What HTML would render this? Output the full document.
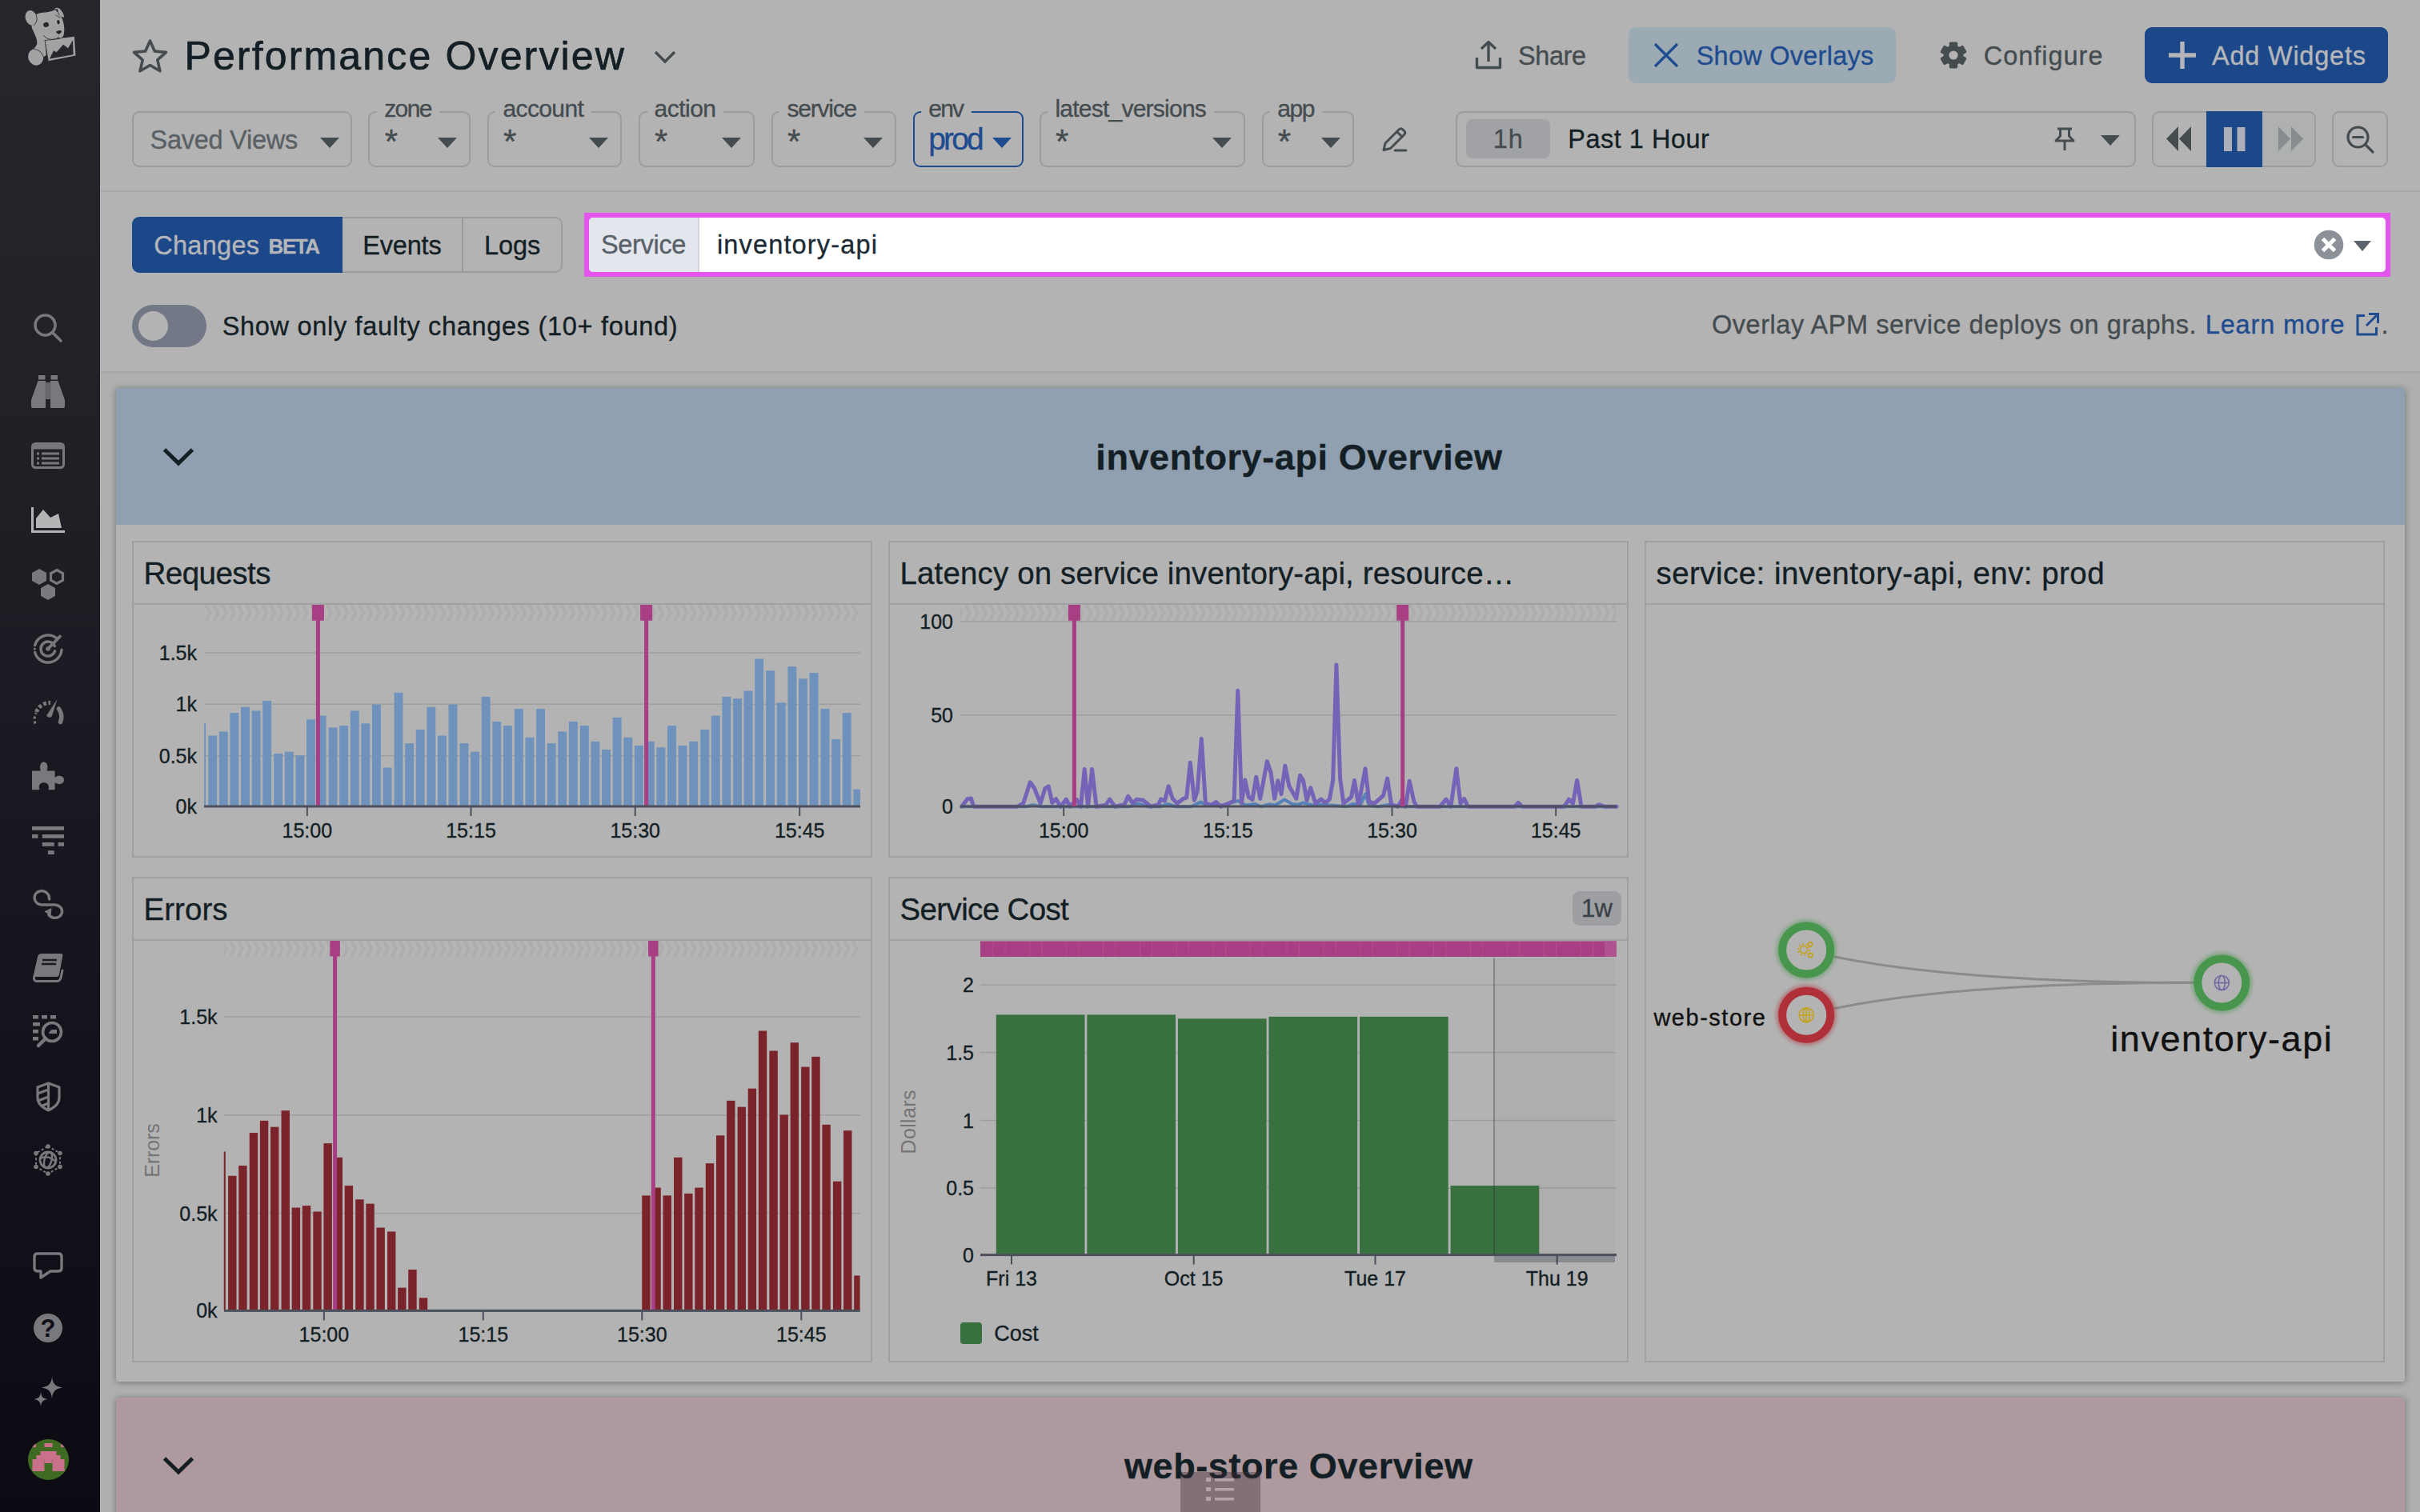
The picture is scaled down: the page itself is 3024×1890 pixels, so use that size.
<!DOCTYPE html>
<html lang="en"><head><meta charset="utf-8"><title>Performance Overview</title>
<style>
*{box-sizing:border-box;margin:0;padding:0}
html,body{width:3024px;height:1890px;overflow:hidden}
body{position:relative;background:#b3b3b3;font-family:"Liberation Sans","DejaVu Sans",sans-serif;color:#141f25;-webkit-font-smoothing:antialiased}
.abs{position:absolute}
.t{position:absolute;white-space:nowrap;line-height:1;-webkit-text-stroke:.35px currentColor}
svg{display:block;overflow:visible}
/* sidebar */
#side{position:absolute;left:0;top:0;width:125px;height:1890px;background:linear-gradient(180deg,#27262d 0%,#222027 30%,#17151d 60%,#0c0a12 100%)}
#side svg{position:absolute}
#sideedge{position:absolute;left:125px;top:0;width:1px;height:1890px;background:#b7b7ba}
/* header */
#hdr{position:absolute;left:125px;top:0;width:2899px;height:239px;background:#b3b3b3}
.hl{position:absolute;left:126px;width:2898px;height:2px;background:#a6a7a9}
.fbox{position:absolute;top:139px;height:70px;border:2px solid #9a9ca2;border-radius:9px}
.fbox .lab{position:absolute;left:12px;top:-24px;padding:0 9px 0 7px;background:#b3b3b3;font-size:30px;line-height:34px;color:#454c50;white-space:nowrap}
.fbox .val{position:absolute;left:19px;top:7px;font-size:38px;line-height:40px;color:#454c50}
.caret{position:absolute;width:0;height:0;border-left:12px solid transparent;border-right:12px solid transparent;border-top:13px solid #454c50}
.fbox .caret{right:15px;top:31px}
.fbox.env{border-color:#1f4b8f}
.fbox.env .lab{color:#454c50}
.btn{position:absolute;top:34px;height:70px;border-radius:9px}
/* tabs */
.tab{position:absolute;top:271px;height:70px;font-size:35px;line-height:66px;border:2px solid #9a9ca2;background:#b3b3b3;color:#141f25;white-space:nowrap}
/* board */
.grp{position:absolute;left:145px;width:2860px;background:#b3b3b3;box-shadow:0 1px 8px 0 rgba(0,0,0,.36);border-radius:3px;overflow:hidden}
.gh{position:absolute;left:0;top:0;width:100%;height:171px}
.wd{position:absolute;border:2px solid #a0a0a0;background:#b3b3b3}
.wd .tl{position:absolute;left:0;top:0;right:0;height:78px;border-bottom:2px solid #a0a0a0}
.wd .tt{position:absolute;left:13px;top:18px;font-size:40px;line-height:44px;white-space:nowrap;color:#141f25}
</style></head><body>
<div id="side">
<!-- logo -->
<svg style="left:20px;top:0px" width="90" height="95" viewBox="0 0 1432 1512">
<g fill="#a2a2a3">
<ellipse cx="300" cy="355" rx="112" ry="152" transform="rotate(-18 300 355)"/>
<path d="M400 290 C500 225 640 270 770 195 C850 250 910 330 935 420 C965 520 965 610 950 690 C935 750 890 765 850 752 C800 805 700 835 620 795 L575 805 L600 1100 L560 1125 L270 1040 C340 990 405 930 420 860 C420 780 380 700 340 610 C290 530 300 400 400 290Z"/>
<path d="M760 182 C800 140 862 150 902 212 C942 262 962 322 952 347 C900 342 860 300 842 262 C830 232 826 200 820 182Z"/>
<ellipse cx="392" cy="1135" rx="150" ry="166" transform="rotate(-22 392 1135)"/>
<path d="M572 800 L1160 730 L1185 1105 L640 1215Z"/>
</g>
<g fill="none" stroke="#27262d" stroke-width="16" stroke-linecap="round">
<path d="M400 300 C430 380 420 450 350 500" stroke-width="14"/>
<path d="M822 185 C830 240 845 280 860 310 M790 300 C820 320 850 345 880 350" stroke-width="12"/>
<path d="M548 708 C600 770 720 830 850 745" stroke-width="14"/>
<path d="M362 978 C450 985 520 1050 538 1112" stroke-width="14"/>
<path d="M575 805 L880 768 M575 805 L640 1210" stroke-width="12"/>
</g>
<g fill="#27262d">
<path d="M668 1170 L748 1005 L805 1040 L940 888 L1035 958 L1128 800 L1140 1085Z"/>
<ellipse cx="598" cy="492" rx="56" ry="48" transform="rotate(-20 598 492)"/>
<ellipse cx="842" cy="440" rx="28" ry="44" transform="rotate(-12 842 440)"/>
<path d="M795 632 C830 605 880 600 908 615 C900 650 875 675 850 680 C825 670 805 655 795 632Z"/>
</g>
</svg>
<!-- search -->
<svg style="left:42px;top:392px" width="36" height="36" viewBox="0 0 36 36" fill="none" stroke="#79787d" stroke-width="3.600" stroke-linecap="round"><circle cx="14.500" cy="14.500" r="12.500"/><path d="M23.500 23.500 L34 34"/></svg>
<!-- binoculars -->
<svg style="left:39px;top:469px" width="42" height="41" viewBox="0 0 42 41" fill="#79787d"><rect x="9" y="0" width="8.500" height="5.500"/><rect x="24.500" y="0" width="8.500" height="5.500"/><path d="M8.500 7 H18 V41 H2 Q0 41 0 39 V31Z"/><path d="M33.500 7 H24 V41 H40 Q42 41 42 39 V31Z"/><rect x="17.500" y="9" width="7" height="21" fill="#68676d"/></svg>
<!-- list -->
<svg style="left:39px;top:553px" width="42" height="33" viewBox="0 0 42 33"><rect x="1.500" y="1.500" width="39" height="30" rx="4" fill="none" stroke="#79787d" stroke-width="3"/><rect x="1.500" y="1.500" width="39" height="7" fill="#79787d"/><g fill="#79787d"><rect x="7" y="12.500" width="3" height="3"/><rect x="13" y="12.500" width="22" height="3"/><rect x="7" y="18.500" width="3" height="3"/><rect x="13" y="18.500" width="22" height="3"/><rect x="7" y="24.500" width="3" height="3"/><rect x="13" y="24.500" width="22" height="3"/></g></svg>
<!-- dashboards (active) -->
<svg style="left:39px;top:634px" width="42" height="32" viewBox="0 0 42 32" fill="#b4b4b4"><path d="M0 0 H3 V29 H42 V32 H0Z"/><path d="M6 26 V14 L15 3 L24 13 L34 8 L38 26Z"/></svg>
<!-- hexagons -->
<svg style="left:39px;top:710px" width="42" height="40" viewBox="0 0 42 40"><path d="M10 1 L19 6 V16 L10 21 L1 16 V6Z" fill="#79787d"/><path d="M21 20 L30 25 V35 L21 40 L12 35 V25Z" fill="#79787d"/><path d="M32 2.500 L39.500 6.800 V15.200 L32 19.500 L24.500 15.200 V6.800Z" fill="none" stroke="#79787d" stroke-width="3.200"/></svg>
<!-- target -->
<svg style="left:41px;top:790px" width="40" height="40" viewBox="0 0 40 40" fill="none" stroke="#79787d" stroke-width="3.400" stroke-linecap="round"><path d="M29.5 7.6 A17 17 0 0 0 2.6 16.6"/><path d="M2.6 25.4 A17 17 0 0 0 36.0 22.2"/><path d="M27.3 17.6 A9 9 0 1 0 27.6 23.8"/><circle cx="19" cy="21" r="2.800" fill="#79787d" stroke="none"/><path d="M19 21 L34 5.500" stroke-width="3.800"/><circle cx="2.300" cy="21" r="1.500" fill="#79787d" stroke="none"/></svg>
<!-- gauge -->
<svg style="left:39px;top:873px" width="42" height="34" viewBox="0 0 42 34" fill="none" stroke="#79787d"><path d="M5 31.500 A17.500 17.500 0 0 1 6 18" stroke-width="3.200" stroke-dasharray="3 3"/><path d="M6.500 17 A17.500 17.500 0 0 1 24 5.500" stroke-width="5" stroke-dasharray="4 2.600"/><path d="M34.500 13 A17.500 17.500 0 0 1 36.500 29.500" stroke-width="5.500" stroke-linecap="round"/><path d="M32.500 1 L26 22 Q22.500 26 19 21.500Z" fill="#79787d" stroke="none"/></svg>
<!-- puzzle -->
<svg style="left:40px;top:952px" width="40" height="35.500" viewBox="0 0 42 37" fill="#79787d"><path d="M0 12 H11.500 C9 5 12 0.500 15.500 0.500 C19 0.500 22 5 19.500 12 H30 V20.500 C36 16.500 42 19.500 42 24 C42 28.500 36 31.500 30 27.500 V37 H21.500 C23.500 30 19 27.500 15.500 27.500 C12 27.500 7.500 30 10 37 H0Z"/></svg>
<!-- filter bars -->
<svg style="left:40px;top:1032.500px" width="40" height="35" viewBox="0 0 40 35" fill="#79787d"><rect x="0" y="0" width="40" height="4.800"/><rect x="0" y="10" width="7.600" height="4.800"/><rect x="12.700" y="10" width="27.300" height="4.800"/><rect x="12.700" y="20" width="15" height="4.800"/><rect x="32.600" y="20" width="7.400" height="4.800"/><rect x="19.900" y="30.200" width="7.800" height="4.800"/></svg>
<!-- loop -->
<svg style="left:41px;top:1111px" width="39" height="39" viewBox="78 493 190 190" fill="none" stroke="#79787d" stroke-width="17" stroke-linecap="round"><path d="M178 556 C180 520 150 503 125 506 C100 510 85 530 88 552 C92 578 112 590 135 590 L212 590 C240 592 258 610 256 634 C252 660 230 672 205 670 C190 668 180 660 174 650"/><path d="M152 632 L190 613 L186 652Z" fill="#79787d" stroke-width="5" stroke-linejoin="round"/></svg>
<!-- book -->
<svg style="left:40px;top:1191px" width="40" height="38" viewBox="0 0 40 38"><path d="M12 1 H36 Q39 1 38.300 4 L34 27 Q33.500 30 30.500 30 H4 Q1 30 2 27 L7 5 Q8 1 12 1Z" fill="#79787d"/><path d="M13 9 H31 M12 14 H30" stroke="#1d1b22" stroke-width="2.600"/><path d="M3 29 Q1 35 6 35.500 H31 Q35 35.500 36 31 L38 22" fill="none" stroke="#79787d" stroke-width="3" stroke-linecap="round"/></svg>
<!-- list search -->
<svg style="left:40px;top:1268px" width="40" height="41" viewBox="0 0 40 41" fill="#79787d"><rect x="1" y="1" width="7" height="4.500"/><rect x="12" y="1" width="7" height="4.500"/><rect x="23" y="1" width="7" height="4.500"/><rect x="1" y="10" width="9" height="4.500"/><rect x="1" y="19" width="7" height="4.500"/><rect x="1" y="28" width="7" height="4.500"/><circle cx="25" cy="22" r="11.500" fill="none" stroke="#79787d" stroke-width="3.600"/><path d="M17 30 L8 39" stroke="#79787d" stroke-width="4.500" stroke-linecap="round"/><path d="M21 24 Q22 19 27 19 H31 V24Z"/></svg>
<!-- shield -->
<svg style="left:45px;top:1352px" width="31" height="38" viewBox="0 0 31 38" fill="none" stroke="#79787d" stroke-width="3.200" stroke-linejoin="round"><path d="M15.500 2 L29 7 V20 C29 28 22 33 15.500 36 C9 33 2 28 2 20 V7Z"/><path d="M15.500 2 V36" /><path d="M2 15 L15.500 10 M2.500 24 L15.500 19 M6 31 L15.500 27" /></svg>
<!-- globe with hex -->
<svg style="left:41px;top:1430px" width="38" height="40" viewBox="0 0 38 40" fill="none" stroke="#79787d"><path d="M19 3 L34 11.500 V28.500 L19 37 L4 28.500 V11.500Z" stroke-width="2" stroke-dasharray="3 2.500"/><g fill="#79787d" stroke="none"><circle cx="19" cy="3" r="2.800"/><circle cx="34" cy="11.500" r="2.800"/><circle cx="34" cy="28.500" r="2.800"/><circle cx="19" cy="37" r="2.800"/><circle cx="4" cy="28.500" r="2.800"/><circle cx="4" cy="11.500" r="2.800"/></g><circle cx="19" cy="20" r="10" stroke-width="2.800"/><ellipse cx="19" cy="20" rx="4.500" ry="10" stroke-width="2.400" transform="rotate(15 19 20)"/><path d="M9.500 18 Q19 13 28.500 22" stroke-width="2.400"/></svg>
<!-- chat -->
<svg style="left:41px;top:1565px" width="38" height="35" viewBox="0 0 38 35" fill="none" stroke="#79787d" stroke-width="3.400" stroke-linejoin="round"><path d="M6 2 H32 Q36 2 36 6 V20 Q36 24 32 24 H22 L10 32 V24 H6 Q2 24 2 20 V6 Q2 2 6 2Z"/></svg>
<!-- help -->
<div class="abs" style="left:42px;top:1642px;width:36px;height:36px;border-radius:50%;background:#79787d;color:#100e16;font-weight:bold;font-size:31px;line-height:37px;text-align:center">?</div>
<!-- sparkle -->
<svg style="left:42px;top:1721px" width="37" height="38" viewBox="0 0 37 38" fill="#79787d"><path d="M23 0 C24 9 27 12 36 13.500 C27 15 24 18 23 27 C22 18 19 15 10 13.500 C19 12 22 9 23 0Z"/><path d="M9 19 C9.700 25 11.500 27 17.500 28 C11.500 29 9.700 31 9 37 C8.300 31 6.500 29 0.500 28 C6.500 27 8.300 25 9 19Z"/></svg>
<!-- avatar -->
<svg style="left:35px;top:1799px" width="51" height="51" viewBox="0 0 51 51"><defs><clipPath id="avc"><circle cx="25.500" cy="25.500" r="25.500"/></clipPath></defs><g clip-path="url(#avc)"><rect width="51" height="51" fill="#3f6a22"/><g fill="#c9708a"><rect x="20.500" y="5" width="10" height="5"/><rect x="5" y="5" width="5" height="5"/><rect x="41" y="5" width="5" height="5"/><rect x="15.500" y="15" width="20" height="5"/><rect x="10.500" y="20" width="30" height="5"/><rect x="5.500" y="25" width="15" height="15"/><rect x="30.500" y="25" width="15" height="15"/><rect x="20.500" y="25" width="10" height="5"/></g></g></svg>
</div>
<div id="sideedge"></div>
<div id="hdr"></div>
<svg class="abs" style="left:165px;top:48px" width="45" height="44" viewBox="0 0 45 44" fill="none" stroke="#454c50" stroke-width="3.600" stroke-linejoin="round"><path d="M22.500 3 L28.300 16 L42.500 17.400 L31.800 26.800 L35 40.800 L22.500 33.500 L10 40.800 L13.200 26.800 L2.500 17.400 L16.700 16Z"/></svg>
<div class="t" style="left:230.4px;top:45.38px;font-size:50px;color:#141f25;letter-spacing:2.16px;-webkit-text-stroke:.7px #141f25;">Performance Overview</div>
<svg class="abs" style="left:817px;top:63px" width="28" height="17" viewBox="0 0 28 17" fill="none" stroke="#454c50" stroke-width="3.400"><path d="M2 2 L14 14 L26 2"/></svg>
<svg class="abs" style="left:1842px;top:50px" width="36" height="37" viewBox="0 0 36 37" fill="none" stroke="#454c50" stroke-width="3.400" stroke-linejoin="round"><path d="M3.500 22 V34.500 H32.500 V22"/><path d="M18 27 V3"/><path d="M9 11 L18 2.500 L27 11"/></svg>
<div class="t" style="left:1897px;top:54.29px;font-size:32.5px;color:#454c50;letter-spacing:-0.43px;">Share</div>
<div class="btn" style="left:2035px;width:334px;background:#9caab4"></div>
<svg class="abs" style="left:2066px;top:53px" width="32" height="32" viewBox="0 0 32 32" fill="none" stroke="#1f4b8f" stroke-width="3.200"><path d="M2 2 L30 30 M30 2 L2 30"/></svg>
<div class="t" style="left:2119.7px;top:54.29px;font-size:32.5px;color:#1f4b8f;letter-spacing:0.25px;">Show Overlays</div>
<svg class="abs" style="left:2424px;top:52px" width="34" height="34" viewBox="-17 -17 34 34"><g fill="#454c50"><rect x="-5.200" y="-16.500" width="10.400" height="9" rx="1.800" transform="rotate(0)"/><rect x="-5.200" y="-16.500" width="10.400" height="9" rx="1.800" transform="rotate(60)"/><rect x="-5.200" y="-16.500" width="10.400" height="9" rx="1.800" transform="rotate(120)"/><rect x="-5.200" y="-16.500" width="10.400" height="9" rx="1.800" transform="rotate(180)"/><rect x="-5.200" y="-16.500" width="10.400" height="9" rx="1.800" transform="rotate(240)"/><rect x="-5.200" y="-16.500" width="10.400" height="9" rx="1.800" transform="rotate(300)"/><circle r="12.400"/></g><circle r="5.600" fill="#b3b3b3"/></svg>
<div class="t" style="left:2478.8px;top:54.29px;font-size:32.5px;color:#454c50;letter-spacing:0.97px;">Configure</div>
<div class="btn" style="left:2680px;width:304px;background:#1c488a"></div>
<svg class="abs" style="left:2710px;top:52px" width="34" height="34" viewBox="0 0 34 34" stroke="#b5b6ba" stroke-width="5.400"><path d="M17 0 V34 M0 17 H34"/></svg>
<div class="t" style="left:2764px;top:54.29px;font-size:32.5px;color:#b5b6ba;letter-spacing:0.77px;">Add Widgets</div>
<div class="fbox" style="left:165px;width:275px"><div class="caret" style="right:14px"></div></div>
<div class="t" style="left:187.5px;top:158.79px;font-size:32.5px;color:#5a6064;letter-spacing:-0.26px;">Saved Views</div>
<div class="fbox" style="left:460px;width:128px"><div class="abs" style="left:9.2px;top:-4px;width:78.2px;height:6px;background:#b3b3b3"></div><div class="caret"></div></div>
<div class="t" style="left:480.2px;top:120.8px;font-size:30px;color:#454c50;letter-spacing:-1.62px;">zone</div>
<div class="t" style="left:480.7px;top:156.45px;font-size:42px;color:#454c50;">*</div>
<div class="fbox" style="left:609px;width:167.5px"><div class="abs" style="left:8.4px;top:-4px;width:119.5px;height:6px;background:#b3b3b3"></div><div class="caret"></div></div>
<div class="t" style="left:628.4px;top:120.8px;font-size:30px;color:#454c50;letter-spacing:-0.6px;">account</div>
<div class="t" style="left:628.9px;top:156.45px;font-size:42px;color:#454c50;">*</div>
<div class="fbox" style="left:798px;width:144.5px"><div class="abs" style="left:8.6px;top:-4px;width:95.4px;height:6px;background:#b3b3b3"></div><div class="caret"></div></div>
<div class="t" style="left:817.6px;top:120.8px;font-size:30px;color:#454c50;letter-spacing:-0.53px;">action</div>
<div class="t" style="left:818.1px;top:156.45px;font-size:42px;color:#454c50;">*</div>
<div class="fbox" style="left:964px;width:155.5px"><div class="abs" style="left:8.4px;top:-4px;width:105.9px;height:6px;background:#b3b3b3"></div><div class="caret"></div></div>
<div class="t" style="left:983.4px;top:120.8px;font-size:30px;color:#454c50;letter-spacing:-1.19px;">service</div>
<div class="t" style="left:983.9px;top:156.45px;font-size:42px;color:#454c50;">*</div>
<div class="fbox env" style="left:1140.5px;width:138px"><div class="abs" style="left:8.7px;top:-4px;width:62.9px;height:6px;background:#b3b3b3"></div></div>
<div class="t" style="left:1160.2px;top:120.8px;font-size:30px;color:#454c50;letter-spacing:-1.73px;">env</div>
<div class="t" style="left:1160.2px;top:153.69px;font-size:39px;color:#1f4b8f;letter-spacing:-2.82px;">prod</div>
<div class="caret" style="left:1240px;top:172px;border-top-color:#1f4b8f"></div>
<div class="fbox" style="left:1299px;width:256.7px"><div class="abs" style="left:8.4px;top:-4px;width:207.4px;height:6px;background:#b3b3b3"></div><div class="caret"></div></div>
<div class="t" style="left:1318.4px;top:120.8px;font-size:30px;color:#454c50;letter-spacing:-0.76px;">latest_versions</div>
<div class="t" style="left:1318.9px;top:156.45px;font-size:42px;color:#454c50;">*</div>
<div class="fbox" style="left:1576.6px;width:115.2px"><div class="abs" style="left:8.7px;top:-4px;width:65.2px;height:6px;background:#b3b3b3"></div><div class="caret"></div></div>
<div class="t" style="left:1596.3px;top:120.8px;font-size:30px;color:#454c50;letter-spacing:-1.43px;">app</div>
<div class="t" style="left:1596.8px;top:156.45px;font-size:42px;color:#454c50;">*</div>
<svg class="abs" style="left:1726px;top:158px" width="33" height="33" viewBox="0 0 33 33" fill="none" stroke="#454c50" stroke-width="3" stroke-linejoin="round"><path d="M3 29.500 L5 21 L22 4 Q24.500 1.500 27 4 L28.500 5.500 Q31 8 28.500 10.500 L11.500 27.500 Z"/><path d="M19.500 6.500 L26 13"/><path d="M17 30 H31" stroke-linecap="round"/></svg>
<div class="fbox" style="left:1819px;width:850px"></div>
<div class="abs" style="left:1832px;top:149px;width:105px;height:49px;border-radius:8px;background:#a1a2a6"></div>
<div class="t" style="left:1865.8px;top:158.29px;font-size:32.5px;color:#454c50;letter-spacing:0.85px;">1h</div>
<div class="t" style="left:1959.3px;top:158.29px;font-size:32.5px;color:#141f25;letter-spacing:0.5px;">Past 1 Hour</div>
<svg class="abs" style="left:2566px;top:159px" width="28" height="30" viewBox="0 0 28 30" fill="none" stroke="#454c50" stroke-width="3" stroke-linejoin="round"><path d="M5 2 H23"/><path d="M8.500 2 V11 L3 17 H25 L19.500 11 V2"/><path d="M14 17 V29"/></svg>
<div class="caret" style="left:2624.500px;top:168.500px"></div>
<div class="fbox" style="left:2689px;width:205px;overflow:hidden"><div class="abs" style="left:136px;top:-2px;width:70px;height:70px;background:#afb0b0"></div></div>
<div class="abs" style="left:2757px;top:139px;width:70px;height:70px;background:#1c488a"></div>
<svg class="abs" style="left:2707px;top:158px" width="32" height="31" viewBox="0 0 32 31" fill="#454c50"><path d="M15 0 V31 L0 15.500Z M31 0 V31 L16 15.500Z"/></svg>
<svg class="abs" style="left:2778.500px;top:159px" width="27" height="30" viewBox="0 0 27 30" fill="#adb0b8"><rect x="0" y="0" width="10" height="30"/><rect x="16.500" y="0" width="10" height="30"/></svg>
<svg class="abs" style="left:2846px;top:158px" width="32" height="31" viewBox="0 0 32 31" fill="#878c8e"><path d="M1 0 V31 L16 15.500Z M17 0 V31 L32 15.500Z"/></svg>
<div class="fbox" style="left:2914px;width:70px"></div>
<svg class="abs" style="left:2932px;top:157px" width="35" height="35" viewBox="0 0 35 35" fill="none" stroke="#454c50" stroke-width="3.200" stroke-linecap="round"><circle cx="14.500" cy="14.500" r="12.500"/><path d="M23.500 23.500 L33 33"/><path d="M8.500 14.500 H20.500"/></svg>
<div class="hl" style="top:238px"></div>
<div class="tab" style="left:165px;width:264px;background:#1c488a;border-color:#1c488a;border-radius:9px 0 0 9px"></div>
<div class="tab" style="left:428px;width:151px;border-left:none"></div>
<div class="tab" style="left:577px;width:126px;border-radius:0 9px 9px 0"></div>
<div class="t" style="left:192.2px;top:291.49px;font-size:32.5px;color:#b5b6ba;letter-spacing:0.29px;">Changes</div>
<div class="t" style="left:335.6px;top:294.89px;font-size:26px;color:#b5b6ba;letter-spacing:-1.48px;font-weight:bold;">BETA</div>
<div class="t" style="left:453.3px;top:291.49px;font-size:32.5px;color:#141f25;letter-spacing:-0.19px;">Events</div>
<div class="t" style="left:605px;top:291.49px;font-size:32.5px;color:#141f25;letter-spacing:-0.09px;">Logs</div>
<div class="abs" style="left:730px;top:266px;width:2257px;height:80px;background:#e455ee"></div>
<div class="abs" style="left:736px;top:272px;width:2245px;height:68px;background:#fff;border-radius:5px;overflow:hidden"><div class="abs" style="left:0;top:0;width:138px;height:68px;background:#e3e6ec;border-right:2px solid #cfd3da"></div></div>
<div class="t" style="left:750.9px;top:289.99px;font-size:32.5px;color:#596168;letter-spacing:-0.31px;">Service</div>
<div class="t" style="left:895.9px;top:289.99px;font-size:32.5px;color:#1c2b34;letter-spacing:1.16px;">inventory-api</div>
<svg class="abs" style="left:2891px;top:287px" width="38" height="38" viewBox="0 0 38 38"><circle cx="19" cy="19" r="18.300" fill="#8c9197"/><path d="M11.500 11.500 L26.500 26.500 M26.500 11.500 L11.500 26.500" stroke="#fff" stroke-width="5"/></svg>
<div class="caret" style="left:2941px;top:300.500px;border-left-width:11.500px;border-right-width:11.500px;border-top-color:#5d646c"></div>
<div class="abs" style="left:165px;top:381px;width:93px;height:53px;border-radius:26.5px;background:#737887"><div class="abs" style="left:8px;top:7.500px;width:37px;height:37px;border-radius:50%;background:#b4b4b4"></div></div>
<div class="t" style="left:277.7px;top:392.19px;font-size:32.5px;color:#141f25;letter-spacing:0.69px;">Show only faulty changes (10+ found)</div>
<div class="t" style="left:2138.9px;top:390.49px;font-size:32.5px;color:#454c50;letter-spacing:0.55px;">Overlay APM service deploys on graphs.</div>
<div class="t" style="left:2755.8px;top:390.49px;font-size:32.5px;color:#1f4b8f;letter-spacing:0.83px;">Learn more</div>
<svg class="abs" style="left:2944px;top:391px" width="29" height="29" viewBox="0 0 29 29" fill="none" stroke="#1f4b8f" stroke-width="3"><path d="M11 3.500 H2 V27 H25.500 V18"/><path d="M16 1.500 H27.500 V13"/><path d="M27 2 L13 16"/></svg>
<div class="t" style="left:2975.5px;top:390.49px;font-size:32.5px;color:#454c50;">.</div>
<div class="hl" style="top:464px"></div>
<div class="abs" style="left:126px;top:466px;width:2898px;height:1424px;background:#aeb0ae"></div>
<div class="grp" style="top:485px;height:1242px"><div class="gh" style="background:#90a0b0"></div></div>
<svg class="abs" style="left:203px;top:559px" width="40" height="25" viewBox="0 0 40 25" fill="none" stroke="#141f25" stroke-width="5"><path d="M2.500 3 L20 20 L37.500 3"/></svg>
<div class="t" style="left:1369.3px;top:549.21px;font-size:45px;color:#141f25;letter-spacing:0.6px;font-weight:bold;">inventory-api Overview</div>
<div class="grp" style="top:1747px;height:300px"><div class="gh" style="background:#ae9a9e;height:300px"></div></div>
<svg class="abs" style="left:203px;top:1820px" width="40" height="25" viewBox="0 0 40 25" fill="none" stroke="#141f25" stroke-width="5"><path d="M2.500 3 L20 20 L37.500 3"/></svg>
<div class="t" style="left:1405px;top:1809.71px;font-size:45px;color:#141f25;letter-spacing:0.58px;font-weight:bold;">web-store Overview</div>
<div class="wd" style="left:165px;top:676px;width:925px;height:396px"><div class="tl"></div></div>
<div class="t" style="left:179.5px;top:697.51px;font-size:38.5px;color:#141f25;letter-spacing:-0.52px;">Requests</div>
<div class="wd" style="left:1110px;top:676px;width:925px;height:396px"><div class="tl"></div></div>
<div class="t" style="left:1124.5px;top:697.51px;font-size:38.5px;color:#141f25;letter-spacing:0.14px;">Latency on service inventory-api, resource…</div>
<div class="wd" style="left:2055px;top:676px;width:925px;height:1027px"><div class="tl"></div></div>
<div class="t" style="left:2069.5px;top:697.51px;font-size:38.5px;color:#141f25;letter-spacing:0.45px;">service: inventory-api, env: prod</div>
<div class="wd" style="left:165px;top:1096px;width:925px;height:607px"><div class="tl"></div></div>
<div class="t" style="left:179.5px;top:1117.51px;font-size:38.5px;color:#141f25;letter-spacing:0.04px;">Errors</div>
<div class="wd" style="left:1110px;top:1096px;width:925px;height:607px"><div class="tl"></div></div>
<div class="t" style="left:1124.5px;top:1117.51px;font-size:38.5px;color:#141f25;letter-spacing:-0.63px;">Service Cost</div>
<div class="abs" style="left:1965px;top:1114px;width:61px;height:43px;border-radius:9px;background:#9d9ea2"></div>
<div class="t" style="left:1976px;top:1120.26px;font-size:31px;color:#3a4146;letter-spacing:-0.63px;">1w</div>
<svg class="abs" style="left:0;top:0;pointer-events:none" width="3024" height="1890" viewBox="0 0 3024 1890" font-family="Liberation Sans, DejaVu Sans, sans-serif">
<defs><pattern id="chev" width="10.100" height="20" patternUnits="userSpaceOnUse" patternTransform="translate(255 756)"><rect width="10.100" height="20" fill="#b5b5b5"/><path d="M0 0 L5.200 10 L0 20 H4.600 L9.800 10 L4.600 0Z" fill="#adadad"/></pattern><filter id="glow" x="-50%" y="-50%" width="200%" height="200%"><feGaussianBlur stdDeviation="2.500"/></filter></defs>
<g><rect x="255" y="815.25" width="820" height="1.500" fill="#9e9e9e"/><rect x="255" y="879.45" width="820" height="1.500" fill="#9e9e9e"/><rect x="255" y="943.95" width="820" height="1.500" fill="#9e9e9e"/><rect x="255" y="756" width="820" height="19.7" fill="url(#chev)"/><rect x="255.18" y="904.34" width="1.94" height="103.66" fill="#6e92bc"/><rect x="260.23" y="919.49" width="10.9" height="88.51" fill="#6e92bc"/><rect x="273.83" y="914.44" width="10.9" height="93.56" fill="#6e92bc"/><rect x="287.43" y="891.13" width="10.9" height="116.87" fill="#6e92bc"/><rect x="301.03" y="883.75" width="10.9" height="124.25" fill="#6e92bc"/><rect x="314.62" y="888.41" width="10.9" height="119.59" fill="#6e92bc"/><rect x="328.22" y="875.98" width="10.9" height="132.02" fill="#6e92bc"/><rect x="342.21" y="942.02" width="10.9" height="65.98" fill="#6e92bc"/><rect x="355.8" y="939.69" width="10.9" height="68.31" fill="#6e92bc"/><rect x="369.4" y="944.35" width="10.9" height="63.65" fill="#6e92bc"/><rect x="383" y="899.29" width="10.9" height="108.71" fill="#6e92bc"/><rect x="396.6" y="894.62" width="10.9" height="113.38" fill="#6e92bc"/><rect x="410.58" y="909.39" width="10.9" height="98.61" fill="#6e92bc"/><rect x="424.18" y="907.06" width="10.9" height="100.94" fill="#6e92bc"/><rect x="437.78" y="888.41" width="10.9" height="119.59" fill="#6e92bc"/><rect x="451.38" y="904.34" width="10.9" height="103.66" fill="#6e92bc"/><rect x="464.97" y="880.64" width="10.9" height="127.36" fill="#6e92bc"/><rect x="478.57" y="959.5" width="10.9" height="48.5" fill="#6e92bc"/><rect x="492.56" y="865.87" width="10.9" height="142.13" fill="#6e92bc"/><rect x="506.15" y="929.2" width="10.9" height="78.8" fill="#6e92bc"/><rect x="519.75" y="912.11" width="10.9" height="95.89" fill="#6e92bc"/><rect x="533.35" y="883.75" width="10.9" height="124.25" fill="#6e92bc"/><rect x="546.95" y="919.49" width="10.9" height="88.51" fill="#6e92bc"/><rect x="560.54" y="880.64" width="10.9" height="127.36" fill="#6e92bc"/><rect x="574.53" y="929.2" width="10.9" height="78.8" fill="#6e92bc"/><rect x="588.13" y="939.69" width="10.9" height="68.31" fill="#6e92bc"/><rect x="601.72" y="870.92" width="10.9" height="137.08" fill="#6e92bc"/><rect x="615.32" y="902" width="10.9" height="106" fill="#6e92bc"/><rect x="628.92" y="907.06" width="10.9" height="100.94" fill="#6e92bc"/><rect x="642.91" y="886.08" width="10.9" height="121.92" fill="#6e92bc"/><rect x="656.5" y="921.82" width="10.9" height="86.18" fill="#6e92bc"/><rect x="670.1" y="886.08" width="10.9" height="121.92" fill="#6e92bc"/><rect x="683.7" y="929.2" width="10.9" height="78.8" fill="#6e92bc"/><rect x="697.3" y="914.44" width="10.9" height="93.56" fill="#6e92bc"/><rect x="710.89" y="902" width="10.9" height="106" fill="#6e92bc"/><rect x="724.88" y="907.06" width="10.9" height="100.94" fill="#6e92bc"/><rect x="738.48" y="926.87" width="10.9" height="81.13" fill="#6e92bc"/><rect x="752.07" y="936.97" width="10.9" height="71.03" fill="#6e92bc"/><rect x="765.67" y="896.95" width="10.9" height="111.05" fill="#6e92bc"/><rect x="779.27" y="921.82" width="10.9" height="86.18" fill="#6e92bc"/><rect x="792.87" y="931.92" width="10.9" height="76.08" fill="#6e92bc"/><rect x="806.85" y="926.87" width="10.9" height="81.13" fill="#6e92bc"/><rect x="820.45" y="934.25" width="10.9" height="73.75" fill="#6e92bc"/><rect x="834.05" y="907.06" width="10.9" height="100.94" fill="#6e92bc"/><rect x="847.65" y="931.92" width="10.9" height="76.08" fill="#6e92bc"/><rect x="861.24" y="926.87" width="10.9" height="81.13" fill="#6e92bc"/><rect x="875.23" y="912.11" width="10.9" height="95.89" fill="#6e92bc"/><rect x="888.83" y="894.62" width="10.9" height="113.38" fill="#6e92bc"/><rect x="902.42" y="870.92" width="10.9" height="137.08" fill="#6e92bc"/><rect x="916.02" y="873.26" width="10.9" height="134.74" fill="#6e92bc"/><rect x="929.62" y="863.54" width="10.9" height="144.46" fill="#6e92bc"/><rect x="943.22" y="823.53" width="10.9" height="184.47" fill="#6e92bc"/><rect x="957.2" y="838.29" width="10.9" height="169.71" fill="#6e92bc"/><rect x="970.8" y="878.31" width="10.9" height="129.69" fill="#6e92bc"/><rect x="984.4" y="833.24" width="10.9" height="174.76" fill="#6e92bc"/><rect x="998" y="848.39" width="10.9" height="159.61" fill="#6e92bc"/><rect x="1011.59" y="841.01" width="10.9" height="166.99" fill="#6e92bc"/><rect x="1025.58" y="886.08" width="10.9" height="121.92" fill="#6e92bc"/><rect x="1039.18" y="924.15" width="10.9" height="83.85" fill="#6e92bc"/><rect x="1052.77" y="891.13" width="10.9" height="116.87" fill="#6e92bc"/><rect x="1066.37" y="986.7" width="8.55" height="21.3" fill="#6e92bc"/><rect x="389.9" y="756" width="15" height="19.7" fill="#a83e83"/><rect x="394.9" y="774.7" width="5" height="233.3" fill="#a83e83"/><rect x="800.1" y="756" width="15" height="19.7" fill="#a83e83"/><rect x="805.1" y="774.7" width="5" height="233.3" fill="#a83e83"/><rect x="255" y="1006.5" width="820" height="3" fill="#4b505c"/><rect x="382.8" y="1008" width="2" height="12" fill="#4b505c"/><text x="383.8" y="1047" font-size="25" text-anchor="middle" fill="#141f25" stroke="#141f25" stroke-width=".35">15:00</text><rect x="587.5" y="1008" width="2" height="12" fill="#4b505c"/><text x="588.5" y="1047" font-size="25" text-anchor="middle" fill="#141f25" stroke="#141f25" stroke-width=".35">15:15</text><rect x="792.7" y="1008" width="2" height="12" fill="#4b505c"/><text x="793.7" y="1047" font-size="25" text-anchor="middle" fill="#141f25" stroke="#141f25" stroke-width=".35">15:30</text><rect x="998.2" y="1008" width="2" height="12" fill="#4b505c"/><text x="999.2" y="1047" font-size="25" text-anchor="middle" fill="#141f25" stroke="#141f25" stroke-width=".35">15:45</text><text x="246" y="825" font-size="25" text-anchor="end" fill="#141f25" stroke="#141f25" stroke-width=".35">1.5k</text><text x="246" y="889.2" font-size="25" text-anchor="end" fill="#141f25" stroke="#141f25" stroke-width=".35">1k</text><text x="246" y="953.7" font-size="25" text-anchor="end" fill="#141f25" stroke="#141f25" stroke-width=".35">0.5k</text><text x="246" y="1017" font-size="25" text-anchor="end" fill="#141f25" stroke="#141f25" stroke-width=".35">0k</text></g>
<g><rect x="1200" y="776.15" width="820" height="1.500" fill="#9e9e9e"/><rect x="1200" y="893.05" width="820" height="1.500" fill="#9e9e9e"/><rect x="1200" y="756" width="820" height="19.7" fill="url(#chev)"/><polyline points="1201.79,1008.26 1282.6,1008.26 1290.37,1006.12 1302.02,1008.26 1410.8,1008.26 1422.46,1004.57 1434.11,1008.26 1449.65,1008.26 1459.36,1004.96 1469.08,1008.26 1488.5,1008.26 1500.16,1002.63 1507.93,1006.51 1527.35,1006.51 1546.78,1001.07 1556.49,1006.51 1568.14,1004.96 1575.91,1008.26 1585.63,1005.35 1593.4,1006.51 1605.05,999.52 1614.76,1004.96 1622.53,1005.73 1628.36,1003.4 1640.02,1006.51 1651.67,1005.73 1663.33,1006.51 1682.75,1008.26 1690.52,1004.96 1700.23,1005.73 1706.06,992.53 1710.72,1006.51 1721.6,1008.26 1737.14,1005.73 1752.68,1008.26 2019.97,1008.26" fill="none" stroke="#5682b9" stroke-width="4" stroke-linejoin="round"/><polyline points="1201.79,1008.26 1208.78,998.74 1213.44,997.96 1216.55,1008.26 1270.94,1008.26 1278.71,1004.18 1287.26,977.76 1292.31,984.76 1300.08,1004.18 1305.91,985.53 1310.18,982.81 1314.84,1003.4 1319.5,998.74 1325.33,1008.26 1332.32,999.13 1336.99,1008.26 1345.53,999.52 1350.58,1008.26 1355.24,961.45 1359.52,1008.26 1364.57,961.45 1370.01,1008.26 1381.66,1006.12 1386.71,999.13 1393.32,1008.26 1404.97,1005.73 1409.63,995.24 1415.46,1004.18 1420.51,999.13 1428.28,1000.3 1438,1008.26 1447.71,1005.73 1450.43,999.13 1455.48,1001.07 1460.14,982.81 1465.19,998.35 1471.02,1004.18 1478.79,998.35 1482.67,997.19 1487.33,953.29 1492.39,1000.3 1496.27,988.64 1501.32,923.37 1506.37,1004.18 1513.75,1006.12 1519.58,1002.63 1525.41,1008.26 1535.12,1004.18 1542.11,1001.07 1546.78,863.15 1551.44,1004.18 1555.71,975.04 1560.37,996.41 1565.03,999.52 1569.7,971.16 1574.75,998.35 1583.29,951.73 1587.96,965.33 1592.62,998.35 1596.89,975.82 1601.17,992.53 1605.83,957.17 1610.88,982.81 1619.81,998.35 1624.48,969.22 1628.36,975.04 1633.02,1000.3 1637.68,984.76 1643.9,1004.18 1650.89,999.13 1656.33,1003.4 1661.38,999.13 1665.66,975.04 1669.93,830.91 1674.59,973.1 1678.87,1004.18 1688.58,996.41 1692.46,975.43 1697.51,1006.12 1706.06,960.67 1710.72,1002.24 1717.72,1004.18 1728.59,994.47 1733.64,973.1 1738.69,1006.12 1746.85,1008.26 1752.68,998.35 1756.57,1008.26 1761.23,976.21 1766.67,1001.07 1770.16,1008.26 1799.3,1008.26 1807.07,999.13 1812.9,1008.26 1819.89,960.67 1824.94,1004.18 1829.6,998.35 1834.27,1008.26 1892.54,1008.26 1897.2,1003.4 1902.25,1008.26 1954.7,1008.26 1960.53,999.13 1965.58,1004.18 1970.63,975.43 1976.07,1008.26 1993.55,1008.26 1998.21,1005.73 2005.21,1008.26 2019.97,1008.26" fill="none" stroke="#7463b6" stroke-width="5" stroke-linejoin="round" stroke-linecap="round"/><rect x="1200" y="1006.5" width="820" height="3" fill="#4b505c"/><rect x="1328.2" y="1008" width="2" height="12" fill="#4b505c"/><text x="1329.2" y="1047" font-size="25" text-anchor="middle" fill="#141f25" stroke="#141f25" stroke-width=".35">15:00</text><rect x="1533.3" y="1008" width="2" height="12" fill="#4b505c"/><text x="1534.3" y="1047" font-size="25" text-anchor="middle" fill="#141f25" stroke="#141f25" stroke-width=".35">15:15</text><rect x="1738.5" y="1008" width="2" height="12" fill="#4b505c"/><text x="1739.5" y="1047" font-size="25" text-anchor="middle" fill="#141f25" stroke="#141f25" stroke-width=".35">15:30</text><rect x="1943.2" y="1008" width="2" height="12" fill="#4b505c"/><text x="1944.2" y="1047" font-size="25" text-anchor="middle" fill="#141f25" stroke="#141f25" stroke-width=".35">15:45</text><rect x="1334.9" y="756" width="15" height="19.7" fill="#a83e83"/><rect x="1339.9" y="774.7" width="5" height="233.3" fill="#a83e83"/><rect x="1745.2" y="756" width="15" height="19.7" fill="#a83e83"/><rect x="1750.2" y="774.7" width="5" height="233.3" fill="#a83e83"/><text x="1191" y="785.9" font-size="25" text-anchor="end" fill="#141f25" stroke="#141f25" stroke-width=".35">100</text><text x="1191" y="902.8" font-size="25" text-anchor="end" fill="#141f25" stroke="#141f25" stroke-width=".35">50</text><text x="1191" y="1017" font-size="25" text-anchor="end" fill="#141f25" stroke="#141f25" stroke-width=".35">0</text></g>
<g><rect x="280" y="1270.15" width="794.7" height="1.500" fill="#9e9e9e"/><rect x="280" y="1393.15" width="794.7" height="1.500" fill="#9e9e9e"/><rect x="280" y="1515.85" width="794.7" height="1.500" fill="#9e9e9e"/><rect x="280" y="1176.5" width="794.7" height="19" fill="url(#chev)"/><rect x="279.76" y="1439.42" width="2.05" height="198.98" fill="#7a232a"/><rect x="285.09" y="1469.77" width="10.4" height="168.63" fill="#7a232a"/><rect x="298.21" y="1457.06" width="10.4" height="181.34" fill="#7a232a"/><rect x="311.75" y="1416.05" width="10.4" height="222.35" fill="#7a232a"/><rect x="324.87" y="1400.87" width="10.4" height="237.53" fill="#7a232a"/><rect x="337.99" y="1408.66" width="10.4" height="229.74" fill="#7a232a"/><rect x="351.53" y="1388.16" width="10.4" height="250.24" fill="#7a232a"/><rect x="364.65" y="1509.55" width="10.4" height="128.85" fill="#7a232a"/><rect x="377.77" y="1507.09" width="10.4" height="131.31" fill="#7a232a"/><rect x="391.31" y="1514.48" width="10.4" height="123.92" fill="#7a232a"/><rect x="404.43" y="1429.17" width="10.4" height="209.23" fill="#7a232a"/><rect x="417.56" y="1446.81" width="10.4" height="191.59" fill="#7a232a"/><rect x="430.68" y="1482.08" width="10.4" height="156.32" fill="#7a232a"/><rect x="444.21" y="1499.3" width="10.4" height="139.1" fill="#7a232a"/><rect x="457.34" y="1504.63" width="10.4" height="133.77" fill="#7a232a"/><rect x="470.46" y="1534.57" width="10.4" height="103.83" fill="#7a232a"/><rect x="484" y="1539.49" width="10.4" height="98.91" fill="#7a232a"/><rect x="497.12" y="1609.62" width="10.4" height="28.78" fill="#7a232a"/><rect x="510.24" y="1587.07" width="10.4" height="51.33" fill="#7a232a"/><rect x="523.78" y="1622.34" width="10.4" height="16.06" fill="#7a232a"/><rect x="802.25" y="1494.38" width="10.4" height="144.02" fill="#7a232a"/><rect x="815.37" y="1484.54" width="10.4" height="153.86" fill="#7a232a"/><rect x="828.5" y="1494.38" width="10.4" height="144.02" fill="#7a232a"/><rect x="842.03" y="1446.81" width="10.4" height="191.59" fill="#7a232a"/><rect x="855.16" y="1491.92" width="10.4" height="146.48" fill="#7a232a"/><rect x="868.28" y="1484.54" width="10.4" height="153.86" fill="#7a232a"/><rect x="881.81" y="1454.19" width="10.4" height="184.21" fill="#7a232a"/><rect x="894.94" y="1419.33" width="10.4" height="219.07" fill="#7a232a"/><rect x="908.06" y="1375.85" width="10.4" height="262.55" fill="#7a232a"/><rect x="921.6" y="1383.65" width="10.4" height="254.75" fill="#7a232a"/><rect x="934.72" y="1360.68" width="10.4" height="277.72" fill="#7a232a"/><rect x="947.84" y="1288.5" width="10.4" height="349.9" fill="#7a232a"/><rect x="961.38" y="1313.52" width="10.4" height="324.88" fill="#7a232a"/><rect x="974.5" y="1393.49" width="10.4" height="244.91" fill="#7a232a"/><rect x="987.63" y="1303.26" width="10.4" height="335.14" fill="#7a232a"/><rect x="1001.16" y="1333.61" width="10.4" height="304.79" fill="#7a232a"/><rect x="1014.28" y="1320.9" width="10.4" height="317.5" fill="#7a232a"/><rect x="1027.41" y="1405.79" width="10.4" height="232.61" fill="#7a232a"/><rect x="1040.94" y="1476.74" width="10.4" height="161.66" fill="#7a232a"/><rect x="1054.07" y="1413.18" width="10.4" height="225.22" fill="#7a232a"/><rect x="1067.19" y="1594.45" width="7.38" height="43.95" fill="#7a232a"/><rect x="412.35" y="1176" width="12.5" height="19.5" fill="#a83e83"/><rect x="416.1" y="1194.5" width="5" height="443.9" fill="#a83e83"/><rect x="810.05" y="1176" width="12.5" height="19.5" fill="#a83e83"/><rect x="813.8" y="1194.5" width="5" height="443.9" fill="#a83e83"/><rect x="280" y="1636.9" width="794.7" height="3" fill="#4b505c"/><rect x="403.9" y="1638.4" width="2" height="12" fill="#4b505c"/><text x="404.9" y="1677" font-size="25" text-anchor="middle" fill="#141f25" stroke="#141f25" stroke-width=".35">15:00</text><rect x="602.8" y="1638.4" width="2" height="12" fill="#4b505c"/><text x="603.8" y="1677" font-size="25" text-anchor="middle" fill="#141f25" stroke="#141f25" stroke-width=".35">15:15</text><rect x="801.3" y="1638.4" width="2" height="12" fill="#4b505c"/><text x="802.3" y="1677" font-size="25" text-anchor="middle" fill="#141f25" stroke="#141f25" stroke-width=".35">15:30</text><rect x="1000.3" y="1638.4" width="2" height="12" fill="#4b505c"/><text x="1001.3" y="1677" font-size="25" text-anchor="middle" fill="#141f25" stroke="#141f25" stroke-width=".35">15:45</text><text x="271.6" y="1279.9" font-size="25" text-anchor="end" fill="#141f25" stroke="#141f25" stroke-width=".35">1.5k</text><text x="271.6" y="1402.9" font-size="25" text-anchor="end" fill="#141f25" stroke="#141f25" stroke-width=".35">1k</text><text x="271.6" y="1525.6" font-size="25" text-anchor="end" fill="#141f25" stroke="#141f25" stroke-width=".35">0.5k</text><text x="271.6" y="1647.4" font-size="25" text-anchor="end" fill="#141f25" stroke="#141f25" stroke-width=".35">0k</text><text transform="translate(198.500 1438) rotate(-90)" font-size="25" text-anchor="middle" fill="#757575" textLength="67.500" lengthAdjust="spacing">Errors</text></g>
<g><rect x="1225" y="1230.35" width="795" height="1.500" fill="#9e9e9e"/><rect x="1225" y="1314.85" width="795" height="1.500" fill="#9e9e9e"/><rect x="1225" y="1399.75" width="795" height="1.500" fill="#9e9e9e"/><rect x="1225" y="1484.25" width="795" height="1.500" fill="#9e9e9e"/><rect x="1225" y="1176.500" width="795" height="19.500" fill="#a83e83"/><rect x="1240.3" y="1176.500" width="1" height="19.500" fill="#b0508f"/><rect x="1255.6" y="1176.500" width="1" height="19.500" fill="#b0508f"/><rect x="1286.2" y="1176.500" width="1" height="19.500" fill="#b0508f"/><rect x="1301.5" y="1176.500" width="1" height="19.500" fill="#b0508f"/><rect x="1332.1" y="1176.500" width="1" height="19.500" fill="#b0508f"/><rect x="1347.4" y="1176.500" width="1" height="19.500" fill="#b0508f"/><rect x="1378" y="1176.500" width="1" height="19.500" fill="#b0508f"/><rect x="1393.3" y="1176.500" width="1" height="19.500" fill="#b0508f"/><rect x="1423.9" y="1176.500" width="1" height="19.500" fill="#b0508f"/><rect x="1439.2" y="1176.500" width="1" height="19.500" fill="#b0508f"/><rect x="1469.8" y="1176.500" width="1" height="19.500" fill="#b0508f"/><rect x="1485.1" y="1176.500" width="1" height="19.500" fill="#b0508f"/><rect x="1515.7" y="1176.500" width="1" height="19.500" fill="#b0508f"/><rect x="1531" y="1176.500" width="1" height="19.500" fill="#b0508f"/><rect x="1561.6" y="1176.500" width="1" height="19.500" fill="#b0508f"/><rect x="1576.9" y="1176.500" width="1" height="19.500" fill="#b0508f"/><rect x="1607.5" y="1176.500" width="1" height="19.500" fill="#b0508f"/><rect x="1622.8" y="1176.500" width="1" height="19.500" fill="#b0508f"/><rect x="1653.4" y="1176.500" width="1" height="19.500" fill="#b0508f"/><rect x="1668.7" y="1176.500" width="1" height="19.500" fill="#b0508f"/><rect x="1699.3" y="1176.500" width="1" height="19.500" fill="#b0508f"/><rect x="1714.6" y="1176.500" width="1" height="19.500" fill="#b0508f"/><rect x="1745.2" y="1176.500" width="1" height="19.500" fill="#b0508f"/><rect x="1760.5" y="1176.500" width="1" height="19.500" fill="#b0508f"/><rect x="1791.1" y="1176.500" width="1" height="19.500" fill="#b0508f"/><rect x="1806.4" y="1176.500" width="1" height="19.500" fill="#b0508f"/><rect x="1837" y="1176.500" width="1" height="19.500" fill="#b0508f"/><rect x="1852.3" y="1176.500" width="1" height="19.500" fill="#b0508f"/><rect x="1882.9" y="1176.500" width="1" height="19.500" fill="#b0508f"/><rect x="1898.2" y="1176.500" width="1" height="19.500" fill="#b0508f"/><rect x="1928.8" y="1176.500" width="1" height="19.500" fill="#b0508f"/><rect x="1944.1" y="1176.500" width="1" height="19.500" fill="#b0508f"/><rect x="1974.7" y="1176.500" width="1" height="19.500" fill="#b0508f"/><rect x="1990" y="1176.500" width="1" height="19.500" fill="#b0508f"/><rect x="2005" y="1176.500" width="15" height="19.500" fill="#b0528f"/><rect x="1867" y="1197.500" width="151" height="372" fill="rgba(40,60,50,.045)"/><rect x="1244.77" y="1268.4" width="110.700" height="300.2" fill="#38703f"/><rect x="1358.34" y="1268.4" width="110.700" height="300.2" fill="#38703f"/><rect x="1471.9" y="1273.32" width="110.700" height="295.28" fill="#38703f"/><rect x="1585.46" y="1270.86" width="110.700" height="297.74" fill="#38703f"/><rect x="1699.02" y="1270.86" width="110.700" height="297.74" fill="#38703f"/><rect x="1812.59" y="1482.08" width="110.700" height="86.52" fill="#38703f"/><rect x="1225" y="1567.1" width="795" height="3" fill="#4b505c"/><rect x="1263" y="1568.6" width="2" height="12" fill="#4b505c"/><text x="1264" y="1606.5" font-size="25" text-anchor="middle" fill="#141f25" stroke="#141f25" stroke-width=".35">Fri 13</text><rect x="1490.7" y="1568.6" width="2" height="12" fill="#4b505c"/><text x="1491.7" y="1606.5" font-size="25" text-anchor="middle" fill="#141f25" stroke="#141f25" stroke-width=".35">Oct 15</text><rect x="1717.5" y="1568.6" width="2" height="12" fill="#4b505c"/><text x="1718.5" y="1606.5" font-size="25" text-anchor="middle" fill="#141f25" stroke="#141f25" stroke-width=".35">Tue 17</text><rect x="1944.7" y="1568.6" width="2" height="12" fill="#4b505c"/><text x="1945.7" y="1606.5" font-size="25" text-anchor="middle" fill="#141f25" stroke="#141f25" stroke-width=".35">Thu 19</text><rect x="1866" y="1197.500" width="2" height="371" fill="rgba(40,45,50,.32)"/><rect x="1867" y="1570" width="151" height="8" fill="rgba(60,62,72,.34)"/><text x="1217" y="1240.1" font-size="25" text-anchor="end" fill="#141f25" stroke="#141f25" stroke-width=".35">2</text><text x="1217" y="1324.6" font-size="25" text-anchor="end" fill="#141f25" stroke="#141f25" stroke-width=".35">1.5</text><text x="1217" y="1409.5" font-size="25" text-anchor="end" fill="#141f25" stroke="#141f25" stroke-width=".35">1</text><text x="1217" y="1494" font-size="25" text-anchor="end" fill="#141f25" stroke="#141f25" stroke-width=".35">0.5</text><text x="1217" y="1577.6" font-size="25" text-anchor="end" fill="#141f25" stroke="#141f25" stroke-width=".35">0</text><text transform="translate(1143.500 1402.500) rotate(-90)" font-size="25" text-anchor="middle" fill="#757575" textLength="80" lengthAdjust="spacing">Dollars</text><rect x="1200" y="1653" width="27" height="27" rx="4" fill="#38703f"/><text x="1242.3" y="1675.5" font-size="27" text-anchor="start" fill="#141f25" stroke="#141f25" stroke-width=".35">Cost</text></g>
<g><path d="M2291.700 1195.800 C2400 1218 2560 1228.300 2742 1228.300" fill="none" stroke="#8b8b8b" stroke-width="3"/><path d="M2291.700 1260.800 C2400 1238.600 2560 1228.300 2742 1228.300" fill="none" stroke="#8b8b8b" stroke-width="3"/><circle cx="2257.2" cy="1187.5" r="30" fill="none" stroke="#48964e" stroke-width="15" opacity=".55" filter="url(#glow)"/><circle cx="2257.2" cy="1187.5" r="30" fill="#b3b3b3" stroke="#48964e" stroke-width="10"/><circle cx="2257.2" cy="1268.8" r="30" fill="none" stroke="#b0303a" stroke-width="15" opacity=".55" filter="url(#glow)"/><circle cx="2257.2" cy="1268.8" r="30" fill="#b3b3b3" stroke="#b0303a" stroke-width="10"/><circle cx="2776.3" cy="1228.5" r="30" fill="none" stroke="#48964e" stroke-width="15" opacity=".55" filter="url(#glow)"/><circle cx="2776.3" cy="1228.5" r="30" fill="#b3b3b3" stroke="#48964e" stroke-width="10"/><g fill="none" stroke="#c4a21c" stroke-width="1.600"><circle cx="2254" cy="1187" r="4.500"/><circle cx="2262" cy="1180.500" r="2.600"/><circle cx="2262.500" cy="1194" r="2.600"/><circle cx="2254" cy="1187" r="7" stroke-dasharray="2.200 2.200"/></g><g fill="none" stroke="#c4a21c" stroke-width="1.600"><circle cx="2257.200" cy="1268.800" r="9"/><ellipse cx="2257.200" cy="1268.800" rx="4" ry="9"/><path d="M2248.200 1268.800 H2266.200 M2257.200 1259.800 V1277.800"/></g><rect x="2766.300" y="1218.500" width="20" height="20" fill="#b0aec0" opacity=".6"/><g fill="none" stroke="#74699c" stroke-width="1.600"><circle cx="2776.300" cy="1228.500" r="9"/><ellipse cx="2776.300" cy="1228.500" rx="4" ry="9"/><path d="M2767.300 1228.500 H2785.300"/></g><text x="2066.4" y="1281.8" font-size="29" text-anchor="start" fill="#111" stroke="#111" stroke-width=".35" textLength="139.500" lengthAdjust="spacing">web-store</text><text x="2637.2" y="1314.4" font-size="45" text-anchor="start" fill="#111" stroke="#111" stroke-width=".35" textLength="276.600" lengthAdjust="spacing">inventory-api</text></g>
</svg>
<div class="abs" style="left:1475px;top:1840px;width:100px;height:50px;background:rgba(60,45,55,.38)"></div>
<svg class="abs" style="left:1507px;top:1847px" width="36" height="30" viewBox="0 0 36 30" fill="#b3a3a7"><rect x="0" y="0" width="6" height="5"/><rect x="11" y="1" width="24" height="3.500"/><rect x="0" y="12" width="6" height="5"/><rect x="11" y="13" width="24" height="3.500"/><rect x="0" y="24" width="6" height="5"/><rect x="11" y="25" width="24" height="3.500"/></svg>
</body></html>
